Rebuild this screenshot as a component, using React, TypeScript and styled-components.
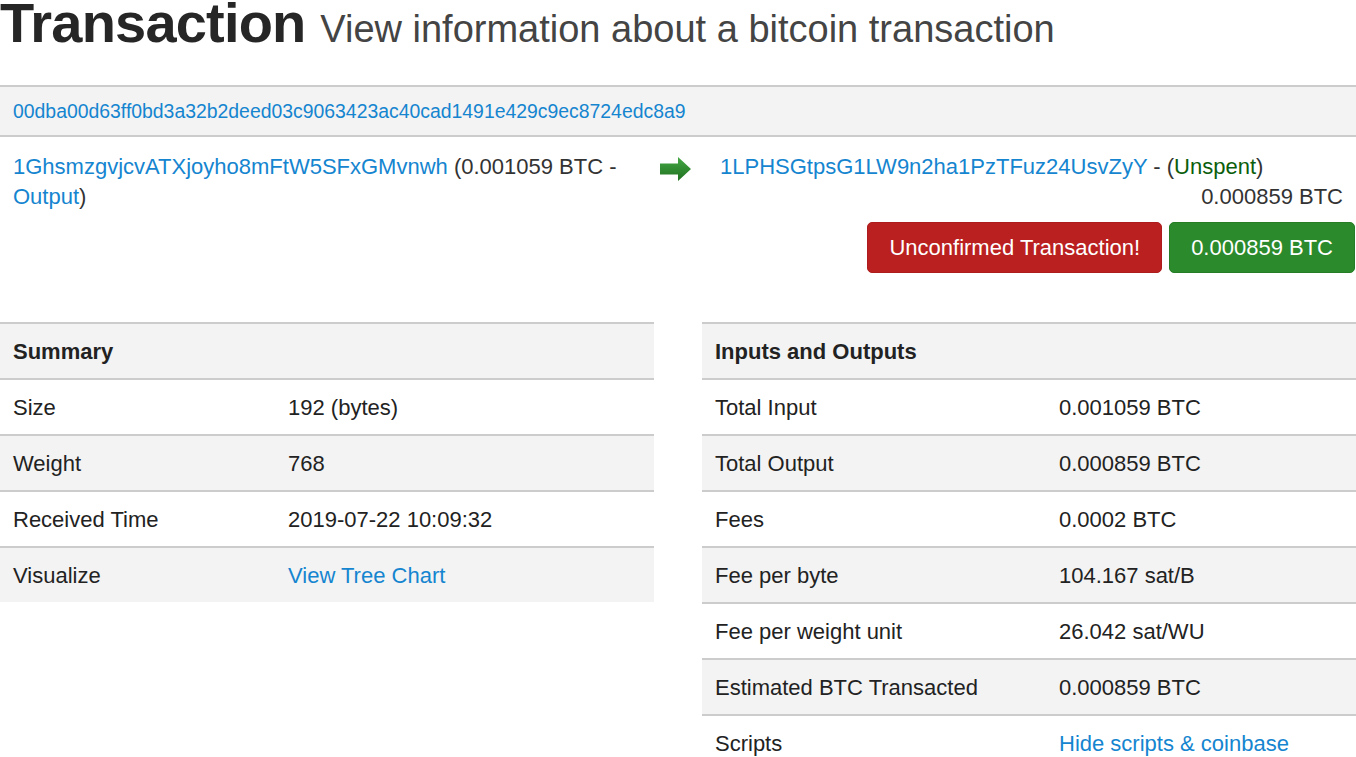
import React from 'react';
import styled, { createGlobalStyle } from 'styled-components';

interface Row {
  label: string;
  value: string;
  link?: boolean;
}

const summaryRows: Row[] = [
  { label: 'Size', value: '192 (bytes)' },
  { label: 'Weight', value: '768' },
  { label: 'Received Time', value: '2019-07-22 10:09:32' },
  { label: 'Visualize', value: 'View Tree Chart', link: true },
];

const ioRows: Row[] = [
  { label: 'Total Input', value: '0.001059 BTC' },
  { label: 'Total Output', value: '0.000859 BTC' },
  { label: 'Fees', value: '0.0002 BTC' },
  { label: 'Fee per byte', value: '104.167 sat/B' },
  { label: 'Fee per weight unit', value: '26.042 sat/WU' },
  { label: 'Estimated BTC Transacted', value: '0.000859 BTC' },
  { label: 'Scripts', value: 'Hide scripts & coinbase', link: true },
];

const InfoTable: React.FC<{ title: string; rows: Row[]; labelWidth: number }> = ({ title, rows, labelWidth }) => (
  <Table>
    <HeadRow $labelWidth={labelWidth}>
      <HeadCell>{title}</HeadCell>
      <HeadCell />
    </HeadRow>
    {rows.map((row, i) => (
      <BodyRow key={row.label} $labelWidth={labelWidth} $striped={i % 2 === 1}>
        <Cell>{row.label}</Cell>
        <Cell>{row.link ? <Link href="#">{row.value}</Link> : row.value}</Cell>
      </BodyRow>
    ))}
  </Table>
);

const Arrow = () => (
  <svg width="31" height="24" viewBox="0 0 31 24">
    <defs>
      <linearGradient id="arrowFill" x1="0" y1="0" x2="0" y2="1">
        <stop offset="0" stopColor="#45a845" />
        <stop offset="1" stopColor="#1f701f" />
      </linearGradient>
    </defs>
    <path d="M0 6.5 H18 V0 L31 12 L18 24 V17.5 H0 Z" fill="url(#arrowFill)" />
  </svg>
);

const App: React.FC = () => (
  <Page>
    <GlobalStyle />
    <Title>
      Transaction <Subtitle>View information about a bitcoin transaction</Subtitle>
    </Title>

    <HashBar>
      <Link href="#">00dba00d63ff0bd3a32b2deed03c9063423ac40cad1491e429c9ec8724edc8a9</Link>
    </HashBar>

    <FlowRow>
      <FlowCell>
        <Link href="#">1GhsmzgvjcvATXjoyho8mFtW5SFxGMvnwh</Link> (0.001059 BTC -{' '}
        <Link href="#">Output</Link>)
      </FlowCell>
      <ArrowCell>
        <Arrow />
      </ArrowCell>
      <FlowCell>
        <Link href="#">1LPHSGtpsG1LW9n2ha1PzTFuz24UsvZyY</Link> - (<Unspent>Unspent</Unspent>)
        <Amount>0.000859 BTC</Amount>
      </FlowCell>
    </FlowRow>

    <ButtonBar>
      <Badge $tone="danger">Unconfirmed Transaction!</Badge>
      <Badge $tone="success">0.000859 BTC</Badge>
    </ButtonBar>

    <Tables>
      <InfoTable title="Summary" rows={summaryRows} labelWidth={275} />
      <InfoTable title="Inputs and Outputs" rows={ioRows} labelWidth={344} />
    </Tables>
  </Page>
);

export default App;

// Styled Components
const GlobalStyle = createGlobalStyle`
  html, body {
    margin: 0;
    background: #fff;
  }
  body {
    font-family: "Liberation Sans", Arial, Helvetica, sans-serif;
    color: #333;
  }
`;

const Page = styled.div`
  width: 1356px;
`;

const Title = styled.h1`
  margin: 0 0 39px;
  height: 46px;
  font-size: 56px;
  line-height: 46px;
  font-weight: 700;
  letter-spacing: -0.8px;
  color: #262626;
  white-space: nowrap;
`;

const Subtitle = styled.small`
  font-size: 38px;
  line-height: 30px;
  font-weight: 400;
  letter-spacing: 0;
  color: #444;
`;

const Link = styled.a`
  color: #1585d0;
  text-decoration: none;
`;

const HashBar = styled.div`
  padding: 11px 13px;
  background: #f3f3f3;
  border-top: 2px solid #ccc;
  border-bottom: 2px solid #ccc;
  font-size: 19.4px;
  line-height: 26px;
`;

const FlowRow = styled.div`
  display: grid;
  grid-template-columns: 647px 60px 1fr;
  padding-top: 15px;
  font-size: 22px;
  line-height: 30px;
`;

const FlowCell = styled.div`
  padding: 0 13px;
`;

const ArrowCell = styled.div`
  padding: 5px 0 0 13px;
`;

const Unspent = styled.span`
  color: #0b5e0b;
`;

const Amount = styled.span`
  display: block;
  text-align: right;
`;

const ButtonBar = styled.div`
  display: flex;
  justify-content: flex-end;
  gap: 7px;
  margin-top: 10px;
  padding-right: 1px;
`;

const Badge = styled.span<{ $tone: 'danger' | 'success' }>`
  padding: 11px 21px;
  border-radius: 5px;
  border: 1px solid ${p => (p.$tone === 'danger' ? '#ad1d1d' : '#257d25')};
  background: ${p => (p.$tone === 'danger' ? '#bb2020' : '#2b8a2b')};
  color: #fff;
  font-size: 22px;
  line-height: 27px;
`;

const Tables = styled.div`
  display: grid;
  grid-template-columns: 1fr 1fr;
  gap: 48px;
  align-items: start;
  margin-top: 49px;
`;

const Table = styled.div`
  border-top: 2px solid #ccc;
  font-size: 22px;
  line-height: 24px;
  color: #222;
`;

const HeadRow = styled.div<{ $labelWidth: number }>`
  display: grid;
  grid-template-columns: ${p => p.$labelWidth}px 1fr;
  background: #f3f3f3;
  font-weight: 700;
`;

const BodyRow = styled.div<{ $labelWidth: number; $striped: boolean }>`
  display: grid;
  grid-template-columns: ${p => p.$labelWidth}px 1fr;
  border-top: 2px solid #ccc;
  background: ${p => (p.$striped ? '#f3f3f3' : '#fff')};
`;

const HeadCell = styled.div`
  padding: 16px 13px 14px;
`;

const Cell = styled.div`
  padding: 16px 13px 14px;
`;
